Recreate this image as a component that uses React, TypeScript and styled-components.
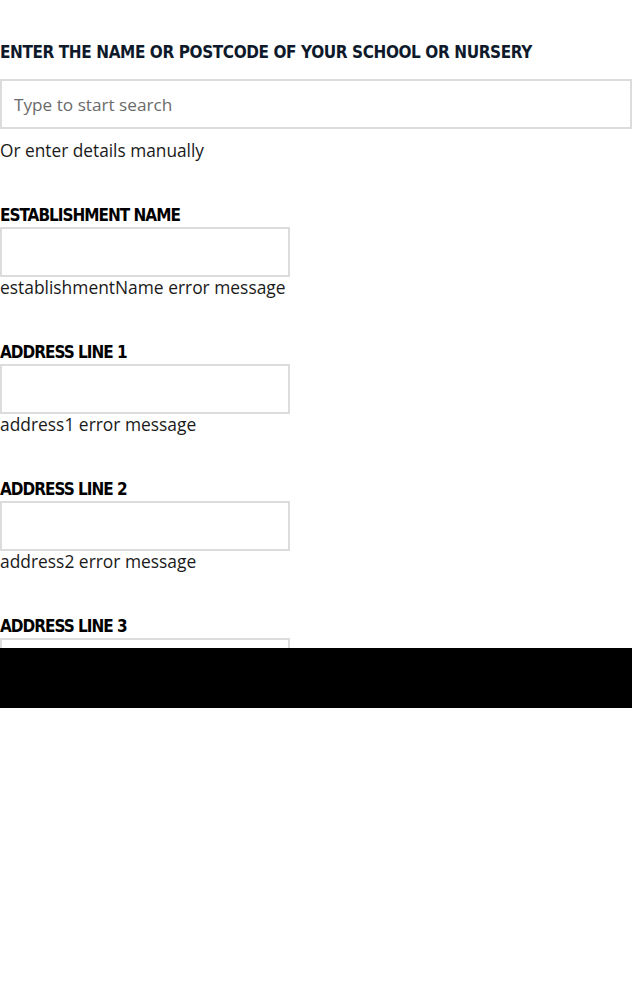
import React from "react";
import styled, { createGlobalStyle } from "styled-components";

const Global = createGlobalStyle`
  html, body { margin: 0; padding: 0; background: #fff; }
  * { box-sizing: border-box; }
`;

const Viewport = styled.div`
  height: 648px;
  overflow: hidden;
`;

const Footer = styled.div`
  height: 60px;
  background: #000;
`;

const Heading = styled.h2`
  margin: 0;
  padding-top: 41px;
  font-family: "DejaVu Sans Condensed", "DejaVu Sans", sans-serif;
  font-stretch: condensed;
  font-weight: 700;
  font-size: 17px;
  line-height: 22px;
  color: #0e1a2b;
  letter-spacing: -0.4px;
  white-space: nowrap;
`;

const SearchInput = styled.input`
  display: block;
  width: 632px;
  height: 50px;
  margin-top: 16px;
  border: 2px solid #dcdcdc;
  padding: 0 12px;
  font-family: "Open Sans", sans-serif;
  font-size: 17.2px;
  color: #222;
  outline: none;
  &::placeholder { color: #6b6b6b; }
`;

const ManualLink = styled.div`
  margin-top: 10px;
  font-family: "Open Sans", sans-serif;
  font-size: 17.3px;
  line-height: 24px;
  color: #1a1a1a;
`;

const Field = styled.div<{ $first?: boolean }>`
  margin-top: ${(p) => (p.$first ? "42px" : "45px")};
`;

const Label = styled.label`
  display: block;
  font-family: "DejaVu Sans Condensed", "DejaVu Sans", sans-serif;
  font-stretch: condensed;
  font-weight: 700;
  font-size: 17px;
  line-height: 20px;
  color: #000;
  letter-spacing: -1px;
`;

const TextInput = styled.input`
  display: block;
  width: 290px;
  height: 50px;
  margin-top: 2px;
  border: 2px solid #dcdcdc;
  padding: 0 12px;
  font-family: "Open Sans", sans-serif;
  font-size: 16px;
  outline: none;
`;

const ErrorText = styled.div`
  margin-top: 0;
  font-family: "Open Sans", sans-serif;
  font-size: 17.4px;
  line-height: 20px;
  color: #1a1a1a;
`;

const fields = [
  { id: "establishmentName", label: "ESTABLISHMENT NAME", error: true },
  { id: "address1", label: "ADDRESS LINE 1", error: true },
  { id: "address2", label: "ADDRESS LINE 2", error: true },
  { id: "address3", label: "ADDRESS LINE 3", error: false },
];

export default function App() {
  return (
    <>
      <Global />
      <Viewport>
        <Heading>ENTER THE NAME OR POSTCODE OF YOUR SCHOOL OR NURSERY</Heading>
        <SearchInput placeholder="Type to start search" />
        <ManualLink>Or enter details manually</ManualLink>
        {fields.map((f, i) => (
          <Field key={f.id} $first={i === 0}>
            <Label htmlFor={f.id}>{f.label}</Label>
            <TextInput id={f.id} />
            {f.error && <ErrorText>{f.id} error message</ErrorText>}
          </Field>
        ))}
      </Viewport>
      <Footer />
    </>
  );
}
